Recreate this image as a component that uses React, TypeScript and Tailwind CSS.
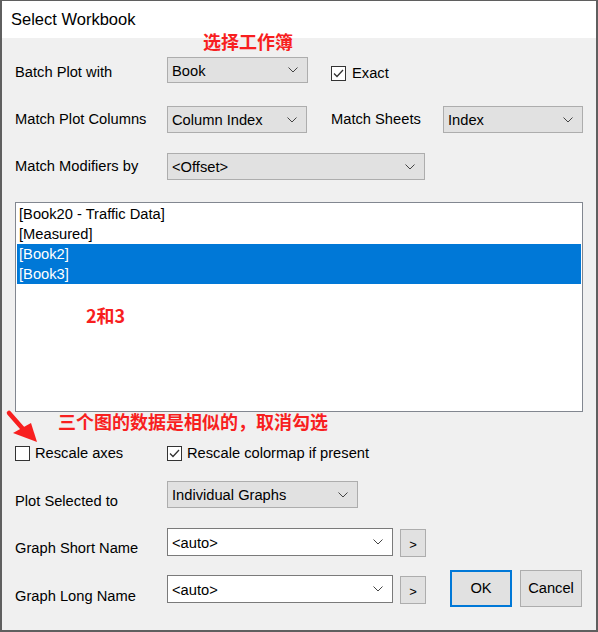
import React from 'react';

const font = "font-['Liberation_Sans',Arial,sans-serif]";
const cjk = "font-['Noto_Sans_CJK_SC','Noto_Sans_CJK_TC',sans-serif]";

function Chevron() {
  return (
    <svg width="10" height="6" viewBox="0 0 10 6" className="shrink-0">
      <polyline points="0.5,0.5 5,5 9.5,0.5" fill="none" stroke="#444" strokeWidth="1" />
    </svg>
  );
}

function Combo({ text, width, height = 'h-[27px]', editable = false }: { text: string; width: string; height?: string; editable?: boolean }) {
  return (
    <div
      className={`${width} ${height} shrink-0 flex items-center justify-between pl-[4px] pr-[9px] border ${
        editable ? 'bg-white border-[#7a7a7a]' : 'bg-[#e1e1e1] border-[#adadad]'
      }`}
    >
      <span className="leading-[20px] pt-[1px]">{text}</span>
      <Chevron />
    </div>
  );
}

function CheckBox({ checked }: { checked: boolean }) {
  return (
    <div className="w-[15px] h-[15px] shrink-0 border border-[#333] bg-white flex items-center justify-center">
      {checked && (
        <svg width="13" height="13" viewBox="0 0 13 13">
          <polyline points="2,6.5 5,9.5 11,3" fill="none" stroke="#333" strokeWidth="1.3" />
        </svg>
      )}
    </div>
  );
}

function Label({ children, className = '' }: { children: React.ReactNode; className?: string }) {
  return <div className={`w-[152px] shrink-0 leading-[20px] ${className}`}>{children}</div>;
}

const items = [
  { name: '[Book20 - Traffic Data]', selected: false },
  { name: '[Measured]', selected: false },
  { name: '[Book2]', selected: true },
  { name: '[Book3]', selected: true },
];

export default function App() {
  return (
    <div
      className={`relative w-[598px] h-[632px] overflow-hidden bg-[#f0f0f0] border-x-2 border-t border-b-2 border-[#5f5f5f] text-[14.7px] text-black ${font}`}
    >
      {/* Title bar */}
      <div className="h-[37px] bg-white flex items-center pl-[9px] text-[16.5px]">Select Workbook</div>

      <div className="flex flex-col pl-[13px]">
        {/* Batch Plot with */}
        <div className="mt-[19px] h-[26px] flex items-start">
          <Label className="mt-[5px]">Batch Plot with</Label>
          <Combo text="Book" width="w-[141px]" height="h-[26px]" />
          <div className="ml-[23px] mt-[6px] flex items-center gap-[6px]">
            <CheckBox checked />
            <span className="leading-[20px]">Exact</span>
          </div>
        </div>

        {/* Match Plot Columns / Sheets */}
        <div className="mt-[23px] h-[27px] flex items-start">
          <Label className="mt-[3px]">Match Plot Columns</Label>
          <Combo text="Column Index" width="w-[140px]" />
          <div className="ml-[24px] w-[112px] mt-[3px] leading-[20px]">Match Sheets</div>
          <Combo text="Index" width="w-[140px]" />
        </div>

        {/* Match Modifiers by */}
        <div className="mt-[20px] h-[27px] flex items-start">
          <Label className="mt-[3px]">Match Modifiers by</Label>
          <Combo text="<Offset>" width="w-[258px]" />
        </div>

        {/* Workbook list */}
        <div className="mt-[22px] w-[568px] h-[210px] border border-[#828790] bg-white p-[1px]">
          {items.map((it) => (
            <div
              key={it.name}
              className={`h-[20px] pl-[2px] leading-[20px] ${it.selected ? 'bg-[#0078d7] text-white' : ''}`}
            >
              {it.name}
            </div>
          ))}
        </div>

        {/* Rescale options */}
        <div className="mt-[33px] h-[16px] flex items-center">
          <div className="w-[152px] flex items-center gap-[5px]">
            <CheckBox checked={false} />
            <span className="leading-[20px]">Rescale axes</span>
          </div>
          <div className="flex items-center gap-[5px]">
            <CheckBox checked />
            <span className="leading-[20px]">Rescale colormap if present</span>
          </div>
        </div>

        {/* Plot Selected to */}
        <div className="mt-[20px] h-[27px] flex items-start">
          <Label className="mt-[10px]">Plot Selected to</Label>
          <Combo text="Individual Graphs" width="w-[191px]" />
        </div>

        {/* Graph Short Name */}
        <div className="mt-[20px] h-[29px] flex items-start">
          <Label className="mt-[10px]">Graph Short Name</Label>
          <Combo text="<auto>" width="w-[226px]" height="h-[28px]" editable />
          <div className="ml-[7px] mt-[1px] w-[26px] h-[28px] bg-[#e1e1e1] border border-[#adadad] flex items-center justify-center pt-[3px] text-[13px]">
            &gt;
          </div>
        </div>

        {/* Graph Long Name + buttons */}
        <div className="mt-[13px] h-[37px] flex items-start">
          <Label className="mt-[16px]">Graph Long Name</Label>
          <div className="mt-[5px]">
            <Combo text="<auto>" width="w-[226px]" height="h-[28px]" editable />
          </div>
          <div className="ml-[7px] mt-[6px] w-[26px] h-[28px] bg-[#e1e1e1] border border-[#adadad] flex items-center justify-center pt-[3px] text-[13px]">
            &gt;
          </div>
          <button className="ml-[24px] w-[62px] h-[37px] bg-[#e1e1e1] border-2 border-[#0078d7]">OK</button>
          <button className="ml-[8px] w-[62px] h-[37px] bg-[#e1e1e1] border border-[#adadad]">Cancel</button>
        </div>
      </div>

      {/* Red annotations */}
      <div className={`absolute left-[201px] top-[31px] text-[18px] leading-[18px] font-bold text-[#f81f1f] ${cjk}`}>
        选择工作簿
      </div>
      <div className={`absolute left-[84px] top-[305px] text-[18px] leading-[18px] font-bold text-[#f81f1f] ${cjk}`}>
        2和3
      </div>
      <div className={`absolute left-[56px] top-[411px] text-[18px] leading-[18px] font-bold text-[#f81f1f] ${cjk}`}>
        三个图的数据是相似的，取消勾选
      </div>
      <svg className="absolute left-[-2px] top-[404px]" width="44" height="44" viewBox="0 0 44 44">
        <line x1="9" y1="8" x2="23" y2="24" stroke="#f81f1f" strokeWidth="4.5" strokeLinecap="round" />
        <polygon points="37,37 13,28 31,18" fill="#f81f1f" />
      </svg>
    </div>
  );
}
